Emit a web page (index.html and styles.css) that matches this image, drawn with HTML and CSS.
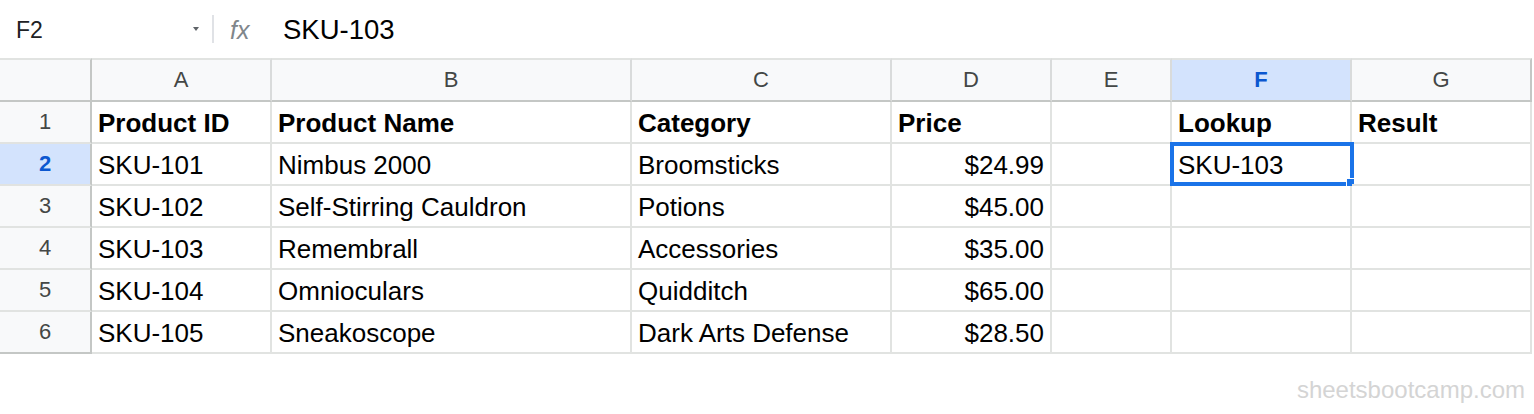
FILE: index.html
```html
<!DOCTYPE html>
<html lang="en">
<head>
<meta charset="utf-8">
<title>Sheet</title>
<link rel="stylesheet" href="styles.css">
</head>
<body>
<div class="app">
  <div class="formula-bar">
    <div class="name-box">
      <span class="cell-ref">F2</span>
      <svg class="caret" width="8" height="6" viewBox="0 0 8 6"><path d="M1 1h6L4 5z" fill="#5f6368"/></svg>
    </div>
    <div class="separator"></div>
    <span class="fx">fx</span>
    <span class="formula">SKU-103</span>
  </div>

  <div class="sheet">
    <div class="corner"></div>
    <div class="col-head">A</div>
    <div class="col-head">B</div>
    <div class="col-head">C</div>
    <div class="col-head">D</div>
    <div class="col-head">E</div>
    <div class="col-head sel">F</div>
    <div class="col-head end">G</div>

    <div class="row-head">1</div>
    <div class="cell bold">Product ID</div>
    <div class="cell bold">Product Name</div>
    <div class="cell bold">Category</div>
    <div class="cell bold">Price</div>
    <div class="cell"></div>
    <div class="cell bold">Lookup</div>
    <div class="cell bold">Result</div>

    <div class="row-head sel">2</div>
    <div class="cell">SKU-101</div>
    <div class="cell">Nimbus 2000</div>
    <div class="cell">Broomsticks</div>
    <div class="cell num">$24.99</div>
    <div class="cell"></div>
    <div class="cell active">SKU-103<span class="selection"><span class="handle"></span></span></div>
    <div class="cell"></div>

    <div class="row-head">3</div>
    <div class="cell">SKU-102</div>
    <div class="cell">Self-Stirring Cauldron</div>
    <div class="cell">Potions</div>
    <div class="cell num">$45.00</div>
    <div class="cell"></div>
    <div class="cell"></div>
    <div class="cell"></div>

    <div class="row-head">4</div>
    <div class="cell">SKU-103</div>
    <div class="cell">Remembrall</div>
    <div class="cell">Accessories</div>
    <div class="cell num">$35.00</div>
    <div class="cell"></div>
    <div class="cell"></div>
    <div class="cell"></div>

    <div class="row-head">5</div>
    <div class="cell">SKU-104</div>
    <div class="cell">Omnioculars</div>
    <div class="cell">Quidditch</div>
    <div class="cell num">$65.00</div>
    <div class="cell"></div>
    <div class="cell"></div>
    <div class="cell"></div>

    <div class="row-head last">6</div>
    <div class="cell">SKU-105</div>
    <div class="cell">Sneakoscope</div>
    <div class="cell">Dark Arts Defense</div>
    <div class="cell num">$28.50</div>
    <div class="cell"></div>
    <div class="cell"></div>
    <div class="cell"></div>
  </div>

  <div class="footer">sheetsbootcamp.com</div>
</div>
</body>
</html>
```

FILE: styles.css
```css
* { box-sizing: border-box; }
html, body { margin: 0; padding: 0; background: #fff; }
body {
  width: 1534px;
  height: 414px;
  overflow: hidden;
  font-family: "Liberation Sans", Arial, sans-serif;
  color: #000;
}
.formula-bar {
  height: 58px;
  display: flex;
  align-items: center;
}
.name-box {
  width: 212px;
  display: flex;
  align-items: center;
  justify-content: space-between;
  padding: 2px 12px 0 16px;
}
.cell-ref {
  font-size: 23px;
  color: #202124;
}
.caret { display: block; margin-top: -2px; }
.separator {
  width: 2px;
  height: 28px;
  background: #e0e2e6;
}
.fx {
  font-style: italic;
  font-size: 25px;
  color: #80868b;
  margin-left: 16px;
  width: 53px;
  padding-top: 2px;
}
.formula {
  font-size: 27.5px;
  color: #000;
  padding-top: 2px;
}
.sheet {
  display: grid;
  grid-template-columns: 92px 180px 360px 260px 160px 120px 180px 180px;
  width: 1532px;
}
.corner, .col-head {
  height: 44px;
  background: #f8f9fa;
  border-top: 2px solid #e1e3e1;
  border-bottom: 2px solid #c4c7c5;
  border-right: 2px solid #c4c7c5;
  text-align: center;
  line-height: 40px;
  font-size: 22px;
  color: #444746;
}
.col-head { border-right-color: #d9dbdb; }
.col-head.end { border-right-color: #c4c7c5; }
.col-head.sel {
  background: #d3e3fd;
  color: #0b57d0;
  font-weight: bold;
}
.row-head {
  height: 42px;
  background: #f8f9fa;
  border-right: 2px solid #c4c7c5;
  border-bottom: 2px solid #e1e3e1;
  text-align: center;
  line-height: 40px;
  font-size: 22px;
  color: #444746;
}
.row-head.last { border-bottom-color: #c4c7c5; }
.row-head.sel {
  background: #d3e3fd;
  color: #0b57d0;
  font-weight: bold;
}
.cell {
  position: relative;
  height: 42px;
  border-right: 2px solid #e1e3e1;
  border-bottom: 2px solid #e1e3e1;
  padding: 7px 6px 5px 6px;
  line-height: 29px;
  font-size: 26px;
  white-space: nowrap;
}
.cell.bold { font-weight: bold; }
.cell.num { text-align: right; }
.selection {
  position: absolute;
  left: -2px;
  top: -2px;
  width: 184px;
  height: 44px;
  border: 4px solid #1a73e8;
  pointer-events: none;
}
.handle {
  position: absolute;
  right: -4px;
  bottom: -4px;
  width: 8px;
  height: 8px;
  background: #1a73e8;
  border-top: 1px solid #fff;
  border-left: 1px solid #fff;
}
.footer {
  text-align: right;
  padding: 22px 9px 0 0;
  font-size: 24px;
  color: #d4d4d4;
}
```
